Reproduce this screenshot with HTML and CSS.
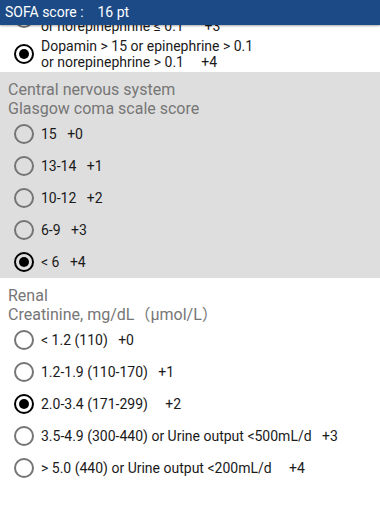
FILE: index.html
```html
<!DOCTYPE html>
<html>
<head>
<meta charset="utf-8">
<link rel="stylesheet" href="styles.css">
</head>
<body>
<header class="topbar">SOFA score :    16 pt</header>
<div class="viewport">
  <main class="content">
    <section class="group white">
      <div class="row multi partial">
        <span class="radio"></span>
        <span class="label">or norepinephrine ≤ 0.1      +3</span>
      </div>
      <div class="row multi">
        <span class="radio checked"></span>
        <span class="label">Dopamin &gt; 15 or epinephrine &gt; 0.1<br>or norepinephrine &gt; 0.1     +4</span>
      </div>
    </section>
    <section class="group gray">
      <div class="group-title">Central nervous system<br>Glasgow coma scale score</div>
      <div class="row"><span class="radio"></span><span class="label">15   +0</span></div>
      <div class="row"><span class="radio"></span><span class="label">13-14   +1</span></div>
      <div class="row"><span class="radio"></span><span class="label">10-12   +2</span></div>
      <div class="row"><span class="radio"></span><span class="label">6-9   +3</span></div>
      <div class="row"><span class="radio checked"></span><span class="label">&lt; 6   +4</span></div>
    </section>
    <section class="group white">
      <div class="group-title">Renal<br>Creatinine, mg/dL（μmol/L）</div>
      <div class="row"><span class="radio"></span><span class="label">&lt; 1.2 (110)   +0</span></div>
      <div class="row"><span class="radio"></span><span class="label">1.2-1.9 (110-170)   +1</span></div>
      <div class="row"><span class="radio checked"></span><span class="label">2.0-3.4 (171-299)     +2</span></div>
      <div class="row"><span class="radio"></span><span class="label">3.5-4.9 (300-440) or Urine output &lt;500mL/d   +3</span></div>
      <div class="row"><span class="radio"></span><span class="label">&gt; 5.0 (440) or Urine output &lt;200mL/d     +4</span></div>
    </section>
  </main>
</div>
</body>
</html>
```

FILE: styles.css
```css
html, body {
  margin: 0;
  padding: 0;
  background: #ffffff;
}
body {
  font-family: Roboto, "Noto Sans CJK JP", sans-serif;
  width: 380px;
  height: 512px;
  overflow: hidden;
  display: flex;
  flex-direction: column;
}
.topbar {
  flex: none;
  position: relative;
  z-index: 2;
  height: 25px;
  line-height: 24px;
  padding-left: 5px;
  background: #1c4a87;
  color: #ffffff;
  font-size: 14px;
  white-space: pre;
  box-shadow: 0 1px 2px rgba(0, 0, 0, 0.35);
}
.viewport {
  flex: 1;
  overflow: hidden;
}
/* list scrolled by 25px, as in the screenshot */
.content {
  display: flex;
  flex-direction: column;
  margin-top: -25px;
}
.group.gray {
  background: #dedede;
}
.group.white {
  background: #ffffff;
}
.group-title {
  padding: 8px 0 0 8px;
  font-size: 16px;
  line-height: 19px;
  color: #767676;
}
.row {
  display: flex;
  align-items: center;
  height: 32px;
  padding-left: 14px;
  gap: 7px;
}
.row.multi {
  height: 36px;
}
.row.partial .label {
  align-self: flex-end;
  margin-bottom: 2px;
}
.label {
  font-size: 14px;
  line-height: 16px;
  color: #1a1a1a;
  white-space: pre;
}
.radio {
  flex: none;
  width: 20px;
  height: 20px;
  box-sizing: border-box;
  border: 2px solid #757575;
  border-radius: 50%;
  display: flex;
  align-items: center;
  justify-content: center;
}
.radio.checked {
  border-color: #000000;
}
.radio.checked::after {
  content: "";
  width: 10px;
  height: 10px;
  border-radius: 50%;
  background: #000000;
}
```
